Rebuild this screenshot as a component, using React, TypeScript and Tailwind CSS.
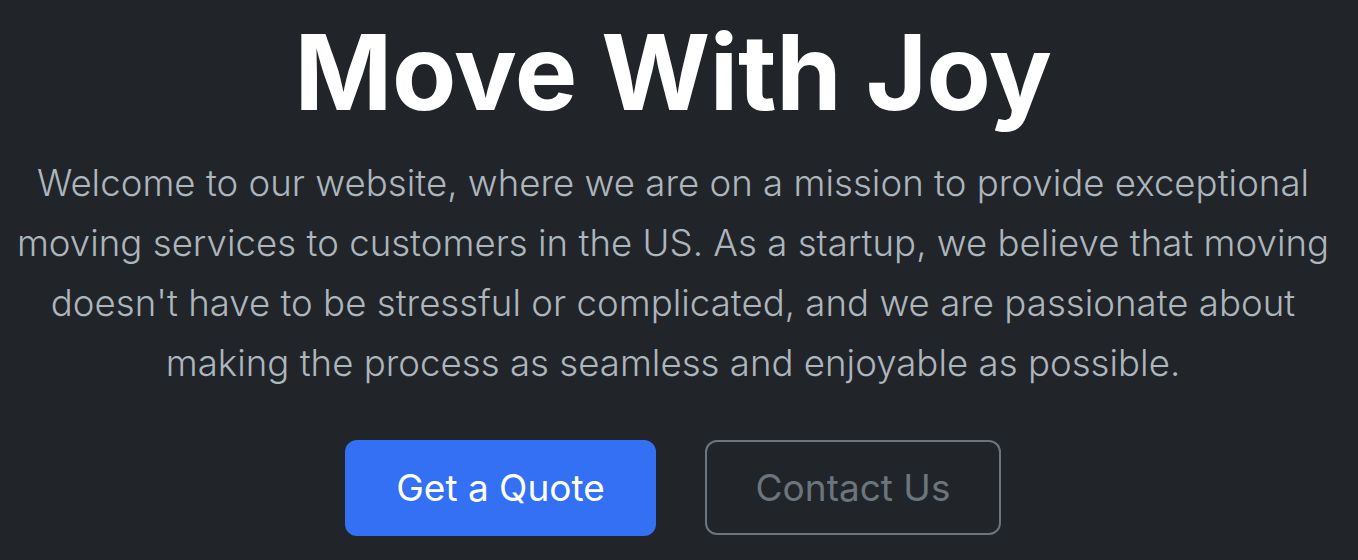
import React from 'react';

export default function App() {
  return (
    <div className="min-h-[560px] w-full bg-[#212529] font-['Inter',sans-serif] text-center overflow-hidden pr-[12px]">
      <div className="flex flex-col items-center">
        <h1 className="mt-[8px] text-[105px] font-bold leading-[128px] text-white tracking-[-0.4px]">Move With Joy</h1>
        <p className="mt-[17px] max-w-[1330px] text-[36.6px] font-light leading-[60px] tracking-[0.03px] text-[#adb5bd]">
          Welcome to our website, where we are on a mission to provide exceptional moving services to customers in the US. As a startup, we believe that moving doesn't have to be stressful or complicated, and we are passionate about making the process as seamless and enjoyable as possible.
        </p>
        <div className="mt-[47px] flex gap-[49px]">
          <button className="h-[96px] w-[311px] rounded-[12px] bg-[#3470f3] text-[37px] text-white">Get a Quote</button>
          <button className="h-[95px] w-[296px] rounded-[12px] border-2 border-[#6c757d] text-[37px] text-[#6c757d]">Contact Us</button>
        </div>
      </div>
    </div>
  );
}
